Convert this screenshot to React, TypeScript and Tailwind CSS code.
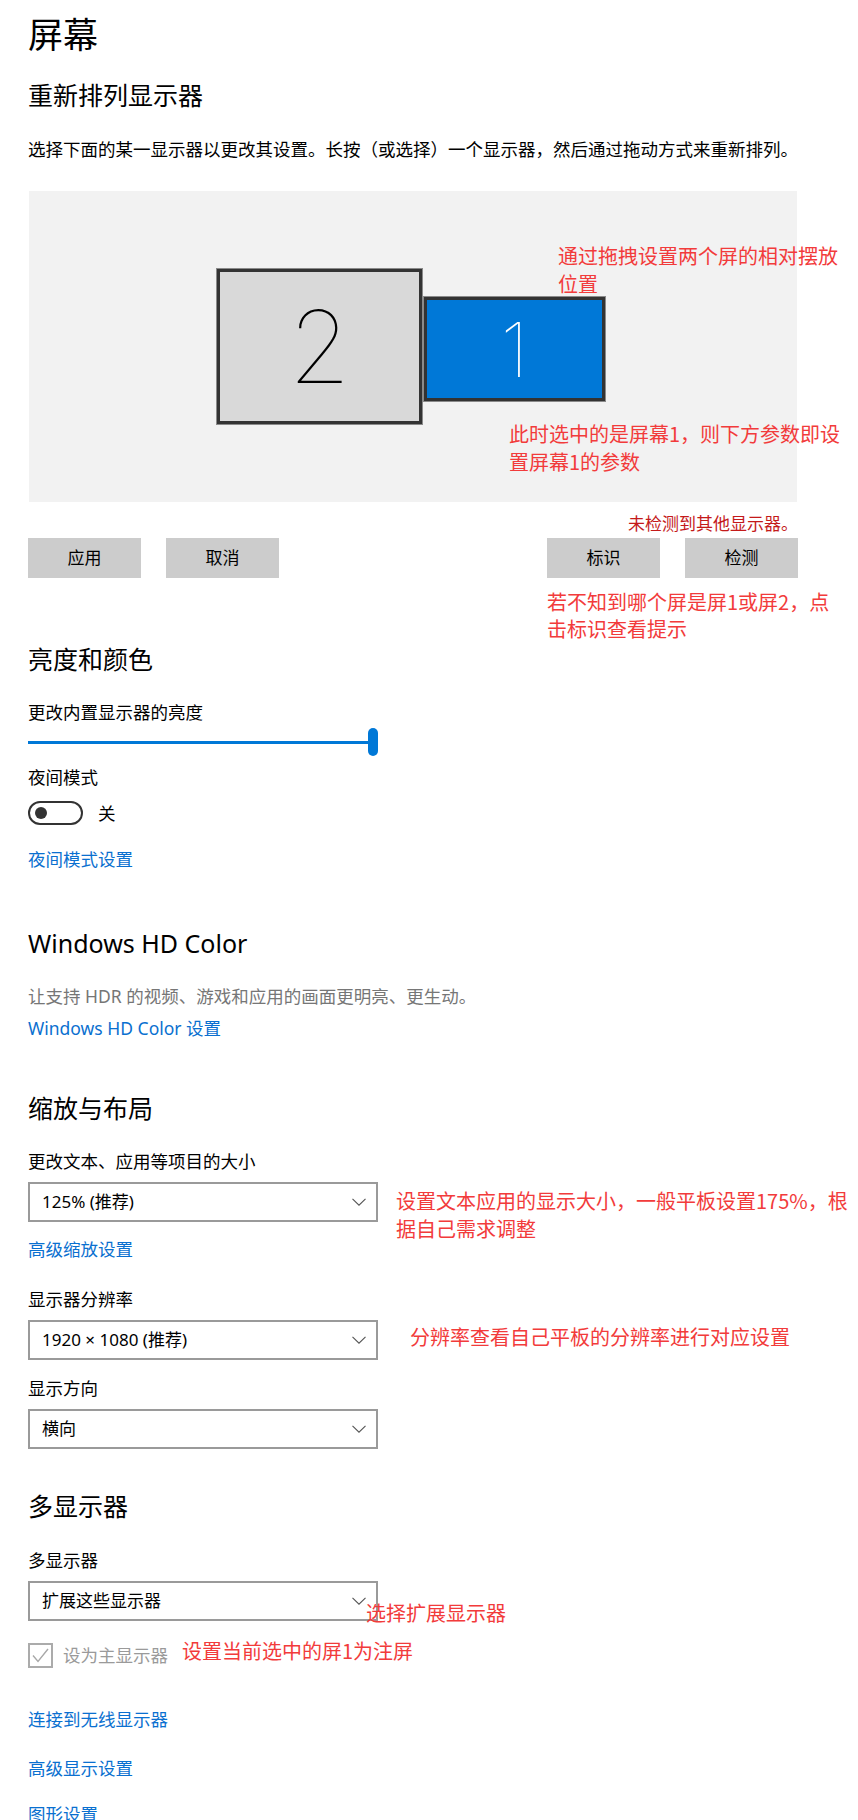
import React from "react";

// Windows "屏幕" settings page with red annotations

const ui = "font-['Noto_Sans','Noto_Sans_CJK_SC',sans-serif]";
const cjk = "font-['Noto_Sans_CJK_SC',sans-serif]";

const Chevron: React.FC = () => (
  <svg width="14" height="8" viewBox="0 0 14 8" className="absolute right-[10px] top-1/2 -translate-y-1/2">
    <path d="M0.5 0.8 L7 7.2 L13.5 0.8" fill="none" stroke="#555" strokeWidth="1.1" />
  </svg>
);

const Select: React.FC<{ value: string }> = ({ value }) => (
  <div className="relative flex h-[40px] w-[350px] items-center border-2 border-[#9a9a9a] bg-white pl-3 text-[17px] text-black">
    {value}
    <Chevron />
  </div>
);

const Note: React.FC<{ className: string; children: React.ReactNode }> = ({ className, children }) => (
  <div className={`absolute whitespace-nowrap text-[20px] leading-[28px] text-[#f23b3b] ${cjk} ${className}`}>{children}</div>
);

const Button: React.FC<{ label: string }> = ({ label }) => (
  <div className="flex h-[40px] w-[113px] items-center justify-center bg-[#cccccc] text-[17px] text-black">{label}</div>
);

const Heading: React.FC<{ children: React.ReactNode; className?: string }> = ({ children, className = "" }) => (
  <h2 className={`text-[25px] leading-[34px] text-black ${className}`}>{children}</h2>
);

const Label: React.FC<{ children: React.ReactNode; className?: string }> = ({ children, className = "text-black" }) => (
  <div className={`text-[17.5px] leading-[24px] ${className}`}>{children}</div>
);

const Link: React.FC<{ children: React.ReactNode; className?: string }> = ({ children, className = "" }) => (
  <div className={`text-[17.5px] leading-[24px] text-[#0a70d0] ${className}`}>{children}</div>
);

export default function App() {
  return (
    <div className={`min-h-[1820px] w-[858px] overflow-hidden bg-white px-[28px] pt-3 ${ui}`}>
      <h1 className="text-[35px] leading-[46px] text-black">屏幕</h1>

      <Heading className="mt-[20px]">重新排列显示器</Heading>
      <Label className="mt-[25px] whitespace-nowrap text-black">选择下面的某一显示器以更改其设置。长按（或选择）一个显示器，然后通过拖动方式来重新排列。</Label>

      {/* monitor arrangement canvas */}
      <div className="relative ml-px mt-[30px] h-[311px] w-[768px] bg-[#f2f2f2]">
        <div className="absolute left-[188px] top-[78px] flex h-[155px] w-[205px] items-center justify-center border-[3px] border-[#333] bg-[#d9d9d9] shadow-[0_0_0_1px_#8a8a8a]">
          <span className="font-['Inter',sans-serif] text-[100px] font-thin leading-none text-black">2</span>
        </div>
        <div className="absolute left-[395px] top-[106px] flex h-[104px] w-[181px] items-center justify-center border-[3px] border-[#333] bg-[#0078d7] shadow-[0_0_0_1px_#8a8a8a]">
          <span className="font-['Inter',sans-serif] text-[76px] font-thin leading-none text-white">1</span>
        </div>
        <Note className="left-[529px] top-[51px]">
          通过拖拽设置两个屏的相对摆放
          <br />
          位置
        </Note>
        <Note className="left-[480px] top-[229px]">
          此时选中的是屏幕1，则下方参数即设
          <br />
          置屏幕1的参数
        </Note>
      </div>

      <div className="w-[770px]">
        <div className={`mt-[9px] text-right text-[17px] leading-[24px] text-[#c41a1a] ${cjk}`}>未检测到其他显示器。</div>
        <div className="mt-[3px] flex justify-between">
          <div className="flex gap-[25px]">
            <Button label="应用" />
            <Button label="取消" />
          </div>
          <div className="flex gap-[25px]">
            <Button label="标识" />
            <Button label="检测" />
          </div>
        </div>
      </div>
      <div className={`ml-[519px] mt-[10px] whitespace-nowrap text-[20px] leading-[27px] text-[#f23b3b] ${cjk}`}>
        若不知到哪个屏是屏1或屏2，点
        <br />
        击标识查看提示
      </div>

      <Heading>亮度和颜色</Heading>
      <Label className="mt-[24px] text-black">更改内置显示器的亮度</Label>
      <div className="mt-[4px] flex h-[28px] w-[350px] items-center">
        <div className="h-[3px] flex-1 bg-[#0078d7]" />
        <div className="h-[28px] w-[10px] rounded-full bg-[#0078d7]" />
      </div>
      <Label className="mt-[9px] text-black">夜间模式</Label>
      <div className="mt-[12px] flex h-[24px] items-center gap-[15px]">
        <div className="flex h-[24px] w-[55px] items-center rounded-full border-2 border-[#333] pl-[5px]">
          <div className="h-[12px] w-[12px] rounded-full bg-[#333]" />
        </div>
        <span className="text-[17.5px] text-black">关</span>
      </div>
      <Link className="mt-[22px]">夜间模式设置</Link>

      <Heading className="mt-[55px]">Windows HD Color</Heading>
      <Label className="mt-[24px] text-[#767676]">让支持 HDR 的视频、游戏和应用的画面更明亮、更生动。</Label>
      <Link className="mt-[8px]">Windows HD Color 设置</Link>

      <Heading className="mt-[51px]">缩放与布局</Heading>
      <Label className="mt-[24px] text-black">更改文本、应用等项目的大小</Label>
      <div className="relative mt-[9px]">
        <Select value="125% (推荐)" />
        <Note className="left-[368px] top-[5px]">
          设置文本应用的显示大小，一般平板设置175%，根
          <br />
          据自己需求调整
        </Note>
      </div>
      <Link className="mt-[15px]">高级缩放设置</Link>

      <Label className="mt-[26px] text-black">显示器分辨率</Label>
      <div className="relative mt-[9px]">
        <Select value="1920 × 1080 (推荐)" />
        <Note className="left-[382px] top-[3px]">分辨率查看自己平板的分辨率进行对应设置</Note>
      </div>

      <Label className="mt-[16px] text-black">显示方向</Label>
      <div className="mt-[9px]">
        <Select value="横向" />
      </div>

      <Heading className="mt-[40px]">多显示器</Heading>
      <Label className="mt-[25px] text-black">多显示器</Label>
      <div className="relative mt-[9px]">
        <Select value="扩展这些显示器" />
        <Note className="left-[338px] top-[18px]">选择扩展显示器</Note>
      </div>

      <div className="relative mt-[22px] flex h-[25px] items-center gap-[10px]">
        <div className="flex h-[25px] w-[25px] items-center justify-center border-2 border-[#ababab]">
          <svg width="17" height="15" viewBox="0 0 17 15">
            <path d="M1 7.5 L6 13.5 L16 1" fill="none" stroke="#a8a8a8" strokeWidth="1.4" />
          </svg>
        </div>
        <span className="text-[17.5px] text-[#9a9a9a]">设为主显示器</span>
        <Note className="left-[154px] top-[-6px]">设置当前选中的屏1为注屏</Note>
      </div>

      <Link className="mt-[39px]">连接到无线显示器</Link>
      <Link className="mt-[25px]">高级显示设置</Link>
      <Link className="mt-[22px]">图形设置</Link>
    </div>
  );
}
